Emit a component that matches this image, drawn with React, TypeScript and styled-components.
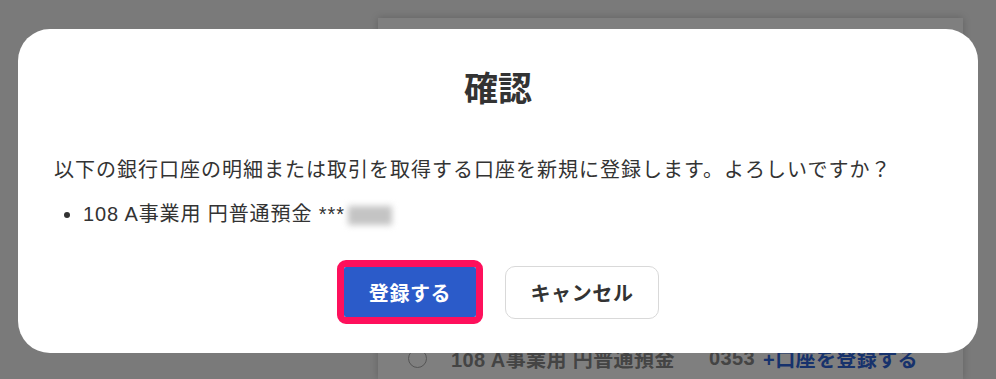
import React from 'react';
import styled, { createGlobalStyle } from 'styled-components';

const GlobalStyle = createGlobalStyle`
  html, body {
    margin: 0;
    padding: 0;
    height: 100%;
    overflow: hidden;
  }
  body {
    background: #f4f4f4;
    font-family: "Liberation Sans", "Noto Sans CJK JP", sans-serif;
    color: #333;
  }
`

const Page = styled.div`
  height: 379px;
  padding: 18px 33px 0 378px;
  box-sizing: border-box;
  overflow: hidden;
`

const BackCard = styled.div`
  background: #fff;
  height: 361px;
  box-shadow: 0 0 8px rgba(0, 0, 0, 0.2);
  padding: 326px 0 0 30px;
  box-sizing: border-box;
`

const AccountRow = styled.div`
  display: flex;
  align-items: center;
  font-size: 20px;
  font-weight: bold;
`

const Radio = styled.span`
  width: 17px;
  height: 17px;
  border-radius: 50%;
  border: 1px solid #aaa;
  margin-right: 24px;
`

const RowName = styled.span<{ wide?: boolean }>`
  color: #888;
  width: ${p => (p.wide ? '258px' : 'auto')};
  letter-spacing: 0.4px;
`

const RowLink = styled.span`
  color: #2f64d8;
  margin-left: 8px;
  letter-spacing: 0.4px;
`

const Overlay = styled.div`
  position: fixed;
  inset: 0;
  background: rgba(0, 0, 0, 0.5);
  display: flex;
  justify-content: center;
  align-items: flex-start;
  padding-top: 29px;
`

const Modal = styled.div`
  width: 960px;
  background: #fff;
  border-radius: 32px;
  padding: 36px 36px 29px;
  box-sizing: border-box;
`

const Title = styled.h2`
  margin: 0;
  text-align: center;
  font-size: 34px;
  line-height: 48px;
  font-weight: bold;
  color: #333;
`

const Message = styled.p`
  margin: 41px 0 0;
  font-size: 20px;
  line-height: 32px;
  letter-spacing: 1px;
`

const AccountList = styled.ul`
  margin: 12px 0 0;
  padding-left: 29px;
  font-size: 20px;
  line-height: 32px;
  letter-spacing: 0.9px;
`

const Masked = styled.span`
  display: inline-block;
  vertical-align: middle;
  width: 44px;
  height: 19px;
  margin-left: 3px;
  background: #c4c4c4;
  filter: blur(3px);
`

const Actions = styled.div`
  margin-top: 30px;
  display: flex;
  justify-content: center;
  align-items: center;
  gap: 22px;
`

const Highlight = styled.div`
  border: 7px solid #fe105c;
  border-radius: 9px;
  display: flex;
`

const Button = styled.button<{ primary?: boolean }>`
  font-family: inherit;
  font-size: 20px;
  font-weight: bold;
  letter-spacing: 0.6px;
  cursor: pointer;
  height: ${p => (p.primary ? '50px' : '53px')};
  width: ${p => (p.primary ? '132px' : '154px')};
  border-radius: ${p => (p.primary ? '2px' : '10px')};
  border: ${p => (p.primary ? 'none' : '1px solid #d9d9d9')};
  background: ${p => (p.primary ? '#2b5bc9' : '#fff')};
  color: ${p => (p.primary ? '#fff' : '#333')};
`

const App: React.FC = () => {
  return (
    <>
      <GlobalStyle />
      <Page>
        <BackCard>
          <AccountRow>
            <Radio />
            <RowName wide>108 A事業用 円普通預金</RowName>
            <RowName>0353</RowName>
            <RowLink>+口座を登録する</RowLink>
          </AccountRow>
        </BackCard>
      </Page>
      <Overlay>
        <Modal>
          <Title>確認</Title>
          <Message>以下の銀行口座の明細または取引を取得する口座を新規に登録します。よろしいですか？</Message>
          <AccountList>
            <li>108 A事業用 円普通預金 ***<Masked /></li>
          </AccountList>
          <Actions>
            <Highlight>
              <Button primary>登録する</Button>
            </Highlight>
            <Button>キャンセル</Button>
          </Actions>
        </Modal>
      </Overlay>
    </>
  );
}

export default App;
